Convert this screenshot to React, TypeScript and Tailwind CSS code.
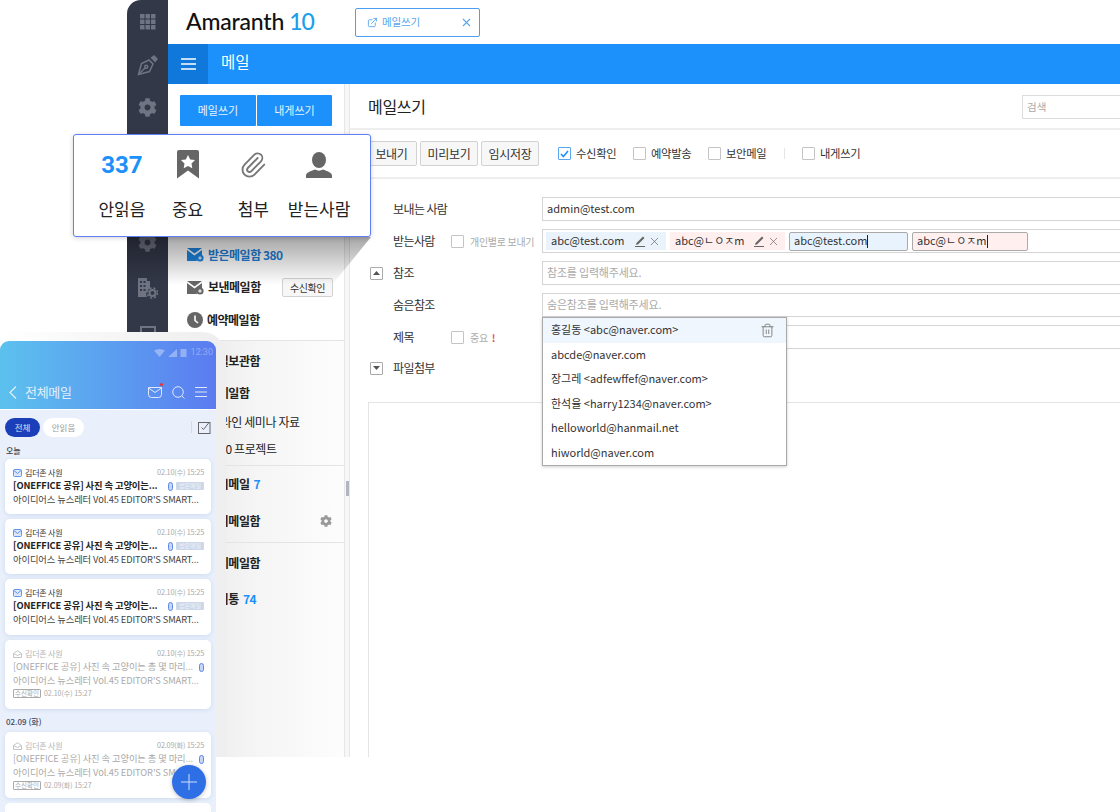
import React from "react";
import { ExternalLink, X, Paperclip, Trash2 } from "lucide-react";
import { FaCog } from "react-icons/fa";

const font = "font-['Noto_Sans_CJK_KR','Noto_Sans',sans-serif]";

const Grid = () => (
    <svg width="16" height="16" viewBox="0 0 16 16" fill="#6f7382">
        {[0, 5.5, 11].map((y) =>
            [0, 5.5, 11].map((x) => <rect key={`${x}-${y}`} x={x} y={y} width="4.5" height="4.5" rx="0.5" />)
        )}
    </svg>
);

const Nib = () => (
    <svg width="22" height="22" viewBox="0 0 22 22" fill="none" stroke="#6f7382" strokeWidth="1.5">
        <path d="M1.500 20.500L4.500 9.500L12 6L16 10L12.500 17.500z" />
        <path d="M1.500 20.500L8 14" />
        <circle cx="9.200" cy="12.800" r="1.500" />
        <path d="M13.500 3.800L18.200 8.500L21 5L17 1z" fill="#6f7382" stroke="none" />
    </svg>
);

const Building = () => (
    <svg width="20" height="22" viewBox="0 0 20 22">
        <path d="M0 1h9v3h3v7.5a6 6 0 0 0-3 8.5H0z" fill="#6f7382" />
        <g fill="#333849">
            <rect x="2" y="4" width="2" height="2" />
            <rect x="5.5" y="4" width="2" height="2" />
            <rect x="2" y="8" width="2" height="2" />
            <rect x="5.5" y="8" width="2" height="2" />
            <rect x="2" y="12" width="2" height="2" />
            <rect x="5.5" y="12" width="2" height="2" />
        </g>
        <circle cx="14.5" cy="16" r="3" fill="none" stroke="#6f7382" strokeWidth="2" />
        <circle cx="14.5" cy="16" r="5" fill="none" stroke="#6f7382" strokeWidth="1.5" strokeDasharray="2 2" />
    </svg>
);

const MailBadge = ({ color }: { color: string }) => (
    <svg width="17" height="15" viewBox="0 0 17 15">
        <path d="M0 1h15L7.5 6.5z" fill={color} />
        <path d="M0 3l7.5 5.5L15 3v5.2a4.5 4.5 0 0 0-5 5.8H0z" fill={color} />
        <circle cx="13" cy="11" r="3.6" fill={color} />
        <path d="M11.2 11h3.6M13 9.2v3.6" stroke="#fff" strokeWidth="1" />
    </svg>
);

const Clock = () => (
    <svg width="16" height="16" viewBox="0 0 16 16">
        <circle cx="8" cy="8" r="8" fill="#666" />
        <path d="M8 3.5V8.5L11 11" stroke="#fff" strokeWidth="1.6" fill="none" />
    </svg>
);

const PenLine = () => (
    <svg width="12" height="12" viewBox="0 0 12 12" fill="none" stroke="#666">
        <path d="M1 11.500h10" />
        <path d="M2 9.800L2.500 8L9 1.500L10.500 3L4 9.500z" fill="#666" stroke="none" />
    </svg>
);

const Check = ({ on }: { on?: boolean }) => (
    <span className={`flex h-[13px] w-[13px] shrink-0 items-center justify-center rounded-[1px] border bg-white ${on ? "border-[#5ba6ee]" : "border-[#c4c4c4]"}`}>
        {on && (
            <svg width="9" height="8" viewBox="0 0 9 8">
                <path d="M1 4l2.4 2.6L8 1" stroke="#1c90fb" strokeWidth="1.6" fill="none" />
            </svg>
        )}
    </span>
);

const Toggle = ({ up }: { up?: boolean }) => (
    <span className="flex h-[13px] w-[13px] items-center justify-center rounded-[1px] border border-[#aaa] bg-white">
        <svg width="7" height="4" viewBox="0 0 7 4">
            <path d={up ? "M3.5 0L7 4H0z" : "M0 0h7L3.5 4z"} fill="#555" />
        </svg>
    </span>
);

const ToolButton = ({ w, children }: { w: string; children: React.ReactNode }) => (
    <button className={`h-[25px] ${w} rounded-[2px] border border-[#d2d2d2] bg-[#f7f7f7] text-[12px] tracking-[-0.3px] text-[#333]`}>
        {children}
    </button>
);

const ToolCheck = ({ on, label, w }: { on?: boolean; label: string; w: string }) => (
    <label className={`flex items-center gap-[5px] ${w} text-[11.3px] tracking-[-0.3px] text-[#333]`}>
        <Check on={on} />
        <span>{label}</span>
    </label>
);

const FormRow = ({ toggle, label, option, mb, children }: { toggle?: React.ReactNode; label?: string; option?: React.ReactNode; mb?: string; children?: React.ReactNode }) => (
    <div className={`flex h-[24px] items-center ${mb ?? "mb-[8px]"}`}>
        <div className="flex w-[25px] items-center">{toggle}</div>
        <div className="w-[58px] text-[12px] tracking-[-0.6px] text-[#333]">{label}</div>
        <div className="flex w-[91px] items-center gap-[6px] text-[10px] tracking-[-0.3px] text-[#aaa]">{option}</div>
        {children}
    </div>
);

const Chip = ({ bg, w, children }: { bg: string; w: string; children: React.ReactNode }) => (
    <div className={`flex h-[18px] items-center justify-between pl-[5px] pr-[5px] ${bg} ${w} text-[11px] text-[#333]`}>
        <span className="pb-[1px]">{children}</span>
        <span className="flex items-center gap-[2px] text-[#666]">
            <PenLine />
            <X size={13} strokeWidth={1.3} />
        </span>
    </div>
);

const EditChip = ({ bg, w, children }: { bg: string; w: string; children: React.ReactNode }) => (
    <div className={`flex h-[19px] items-center rounded-[2px] border border-[#aaa] px-[4px] ${bg} ${w} text-[11px] text-[#333]`}>
        <span className="pb-[1px]">{children}</span>
        <span className="h-[13px] w-px bg-[#222]" />
    </div>
);

const SideRow = ({ h, className, children }: { h: string; className?: string; children: React.ReactNode }) => (
    <div className={`flex items-center ${h} ${className ?? ""}`}>{children}</div>
);

const Clip = () => (
    <span className="inline-block h-[9px] w-[5px] shrink-0 rounded-[3px] border border-[#5f86e8] bg-[#c6d6f7]" />
);

const Envelope = ({ open }: { open?: boolean }) =>
    open ? (
        <svg width="9" height="8" viewBox="0 0 9 8" fill="none" stroke="#c4c4c4">
            <path d="M.5 3.5L4.5.7l4 2.8v4h-8zM.5 3.5l4 2 4-2" />
        </svg>
    ) : (
        <svg width="9" height="8" viewBox="0 0 9 8">
            <rect x=".5" y=".5" width="8" height="7" rx="1" fill="#dbe6fb" stroke="#5f95ee" />
            <path d="M1 1.5l3.5 3 3.5-3" fill="none" stroke="#5f95ee" />
        </svg>
    );

const PhoneCard = ({ h, date, read, confirm }: { h: string; date: string; read?: boolean; confirm?: string }) => (
    <div className={`mb-[5px] ${h} rounded-[5px] bg-white pl-[8px] pr-[7px] pt-[7px] shadow-[0_1px_4px_rgba(90,120,190,0.18)]`}>
        <div className="flex h-[13px] items-center justify-between">
            <div className={`flex items-center gap-[3px] text-[8px] tracking-[-0.2px] ${read ? "text-[#b5b5b5]" : "text-[#333]"}`}>
                <Envelope open={read} />
                <span>김더존 사원</span>
            </div>
            <span className="text-[7.3px] tracking-[-0.2px] text-[#aaa]">{date}</span>
        </div>
        {read ? (
            <div className="flex h-[14px] items-center justify-between text-[9.3px] tracking-[-0.1px] text-[#aaa]">
                <span className="truncate">[ONEFFICE 공유] 사진 속 고양이는 총 몇 마리...</span>
                <Clip />
            </div>
        ) : (
            <div className="flex h-[14px] items-center text-[9.3px] tracking-[-0.1px] text-[#222]">
                <span className="w-[155px] truncate font-bold">[ONEFFICE 공유] 사진 속 고양이는...</span>
                <Clip />
                <span className="ml-[3px] h-[8px] w-[28px] rounded-[1px] bg-[#ccd7ea] text-center text-[6px] leading-[8px] text-[#eef2f9]">받은메일</span>
            </div>
        )}
        <div className={`h-[13px] truncate text-[9.3px] leading-[13px] tracking-[-0.1px] ${read ? "text-[#aaa]" : "text-[#444]"}`}>
            아이디어스 뉴스레터 Vol.45 EDITOR'S SMART...
        </div>
        {confirm && (
            <div className="mt-[1px] flex items-center gap-[3px] text-[7px] text-[#aaa]">
                <span className="rounded-[1px] border border-[#aaa] px-[1px] text-[6.5px] leading-[7px]">수신확인</span>
                <span>{confirm}</span>
            </div>
        )}
    </div>
);

const Phone = () => (
    <div className="absolute left-0 top-[341px] h-[471px] w-[216px] overflow-hidden rounded-t-[9px] bg-[#e9f0fb]">
        <div className="h-[69px] border-b border-white bg-gradient-to-r from-[#5cc1ee] to-[#5b7bf0] pt-[6px]">
            <div className="flex h-[12px] items-center justify-end gap-[3px] pr-[3px] text-[9px] text-white/35">
                <svg width="11" height="8" viewBox="0 0 11 8" fill="currentColor"><path d="M0 1.5Q5.5-1.5 11 1.5L5.5 8z" /></svg>
                <svg width="9" height="8" viewBox="0 0 9 8" fill="currentColor"><path d="M9 0v8H0z" /></svg>
                <svg width="7" height="8" viewBox="0 0 7 8" fill="currentColor"><rect x=".5" width="6" height="8" rx=".5" /></svg>
                <span className="ml-[1px] font-['Roboto',sans-serif]">12:30</span>
            </div>
            <div className="mt-[21px] flex h-[24px] items-center pl-[9px] pr-[9px] text-white/80">
                <svg width="8" height="13" viewBox="0 0 8 13" fill="none" stroke="currentColor" strokeWidth="1.2"><path d="M7 .5L1 6.5l6 6" /></svg>
                <span className="ml-[8px] flex-1 text-[13px] tracking-[-0.3px]">전체메일</span>
                <div className="relative mr-[10px]">
                    <svg width="14" height="12" viewBox="0 0 14 12" fill="none" stroke="currentColor"><path d="M.5 1.5h13v7a3 3 0 0 1-3 3h-7a3 3 0 0 1-3-3zM.5 2l6.5 4.5L13.5 2" /></svg>
                    <span className="absolute -right-[1px] -top-[3px] h-[3px] w-[3px] rounded-full bg-[#f03030]" />
                </div>
                <svg className="mr-[10px]" width="13" height="13" viewBox="0 0 13 13" fill="none" stroke="currentColor"><circle cx="6" cy="6" r="5.3" /><path d="M10 10l2.5 2.5" /></svg>
                <svg width="12" height="10" viewBox="0 0 12 10" fill="none" stroke="currentColor"><path d="M0 .5h12M0 5h12M0 9.5h12" /></svg>
            </div>
        </div>
        <div className="px-[5px]">
            <div className="flex h-[33px] items-center pt-[1px]">
                <span className="flex h-[19px] w-[35px] items-center justify-center rounded-full bg-[#1a3fb8] text-[8.5px] text-white/85">전체</span>
                <span className="ml-[3px] flex h-[19px] w-[41px] items-center justify-center rounded-full bg-white text-[8.5px] text-[#999]">안읽음</span>
                <span className="ml-auto h-[12px] w-px bg-[#d4dbe6]" />
                <svg className="ml-[6px]" width="13" height="13" viewBox="0 0 13 13" fill="none" stroke="#666"><rect x=".5" y="1.5" width="11.5" height="11" /><path d="M3.5 6.5l2 2L11 1.5" /></svg>
            </div>
            <div className="mb-[1px] h-[15px] pl-[1px] text-[8px] font-medium leading-[15px] text-[#444]">오늘</div>
            <PhoneCard h="h-[55px]" date="02.10(수) 15:25" />
            <PhoneCard h="h-[55px]" date="02.10(수) 15:25" />
            <PhoneCard h="h-[56px]" date="02.10(수) 15:25" />
            <PhoneCard h="h-[69px]" date="02.10(수) 15:25" read confirm="02.10(수) 15:27" />
            <div className="h-[18px] pl-[1px] pt-[2px] text-[8px] font-medium leading-[12px] text-[#3d4a68]">02.09 (화)</div>
            <PhoneCard h="h-[66px]" date="02.09(화) 15:25" read confirm="02.09(화) 15:27" />
            <div className="h-[20px] rounded-[5px] bg-white" />
        </div>
        <div className="absolute left-[172px] top-[424px] flex h-[34px] w-[34px] items-center justify-center rounded-full bg-[#2f6fe6] shadow-[0_1px_4px_rgba(0,0,0,0.25)]">
            <svg width="16" height="16" viewBox="0 0 16 16" stroke="#cfe0ff" strokeWidth="1"><path d="M8 0v16M0 8h16" /></svg>
        </div>
    </div>
);

const SummaryCard = () => (
    <div className="absolute left-[73px] top-[134px] h-[103px] w-[298px] rounded-[3px] border-[1.5px] border-[#5f80f5] bg-white pl-[15px] pt-[14px] text-[#222] shadow-[0_1px_5px_rgba(0,0,0,0.18)]">
        <div className="grid w-[263px] grid-cols-4">
            {[
                {
                    k: "안읽음",
                    icon: <span className="font-['Roboto',sans-serif] text-[24px] font-bold leading-[30px] text-[#1c90fb]">337</span>,
                },
                {
                    k: "중요",
                    icon: (
                        <svg width="22" height="29" viewBox="0 0 22 29">
                            <path d="M0 2Q0 0 2 0H20Q22 0 22 2V28.500L11 20.500L0 28.500Z" fill="#666" />
                            <path d="M11 5l2.200 4.400 4.800.7-3.500 3.400.8 4.800L11 16l-4.300 2.300.8-4.800-3.500-3.400 4.800-.7z" fill="#fff" />
                        </svg>
                    ),
                },
                { k: "첨부", icon: <Paperclip size={28} strokeWidth={1.6} color="#777" /> },
                {
                    k: "받는사람",
                    icon: (
                        <svg width="26" height="26" viewBox="0 0 26 26" fill="#666">
                            <ellipse cx="13" cy="8" rx="7" ry="8" />
                            <path d="M0 26v-2.500c0-3 5-4.500 9-6 2.500 1.500 5.500 1.500 8 0 4 1.500 9 3 9 6v2.500z" />
                        </svg>
                    ),
                },
            ].map((c) => (
                <div key={c.k} className="flex flex-col items-center">
                    <div className="flex h-[31px] items-center justify-center">{c.icon}</div>
                    <div className="mt-[17px] whitespace-nowrap text-[17px] leading-[24px]">{c.k}</div>
                </div>
            ))}
        </div>
    </div>
);

const recent = [
    "홍길동 <abc@naver.com>",
    "abcde@naver.com",
    "장그레 <adfewffef@naver.com>",
    "한석율 <harry1234@naver.com>",
    "helloworld@hanmail.net",
    "hiworld@naver.com",
];

export default function App() {
    return (
        <div className={`relative h-[812px] w-[1120px] overflow-hidden bg-white ${font}`}>
            <div className="ml-[127px] flex h-[757px] w-[993px]">
                {/* left rail */}
                <div className="flex w-[41px] shrink-0 flex-col items-center rounded-tl-[14px] bg-[#333849] text-[#6f7382]">
                    <div className="flex h-[43px] items-center"><Grid /></div>
                    <div className="flex h-[43px] items-center"><Nib /></div>
                    <div className="flex h-[43px] items-center"><FaCog size={19} /></div>
                    <div className="h-[91px]" />
                    <div className="flex h-[45px] items-center"><FaCog size={19} /></div>
                    <div className="flex h-[45px] items-center"><Building /></div>
                    <div className="flex h-[45px] items-center"><span className="h-[14px] w-[16px] border-[2px] border-[#6f7382]" /></div>
                </div>

                <div className="flex min-w-0 flex-1 flex-col">
                    {/* top bar */}
                    <div className="flex h-[44px] items-center bg-white pl-[18px]">
                        <div className="-mt-[2px] w-[169px] whitespace-nowrap font-['Lato',sans-serif] text-[23px] font-medium leading-none tracking-[-0.2px] text-[#111]">
                            Amaranth<span className="ml-[5px] tracking-[-1px] text-[#1c9fea]">10</span>
                        </div>
                        <div className="flex h-[29px] w-[125px] items-center rounded-[2px] border border-[#4b9ff0] pl-[11px] pr-[6px] text-[10.5px] tracking-[-0.2px] text-[#5aa6ee]">
                            <ExternalLink size={11} />
                            <span className="ml-[4px] flex-1">메일쓰기</span>
                            <X size={13} />
                        </div>
                    </div>
                    <div className="flex h-[40px] items-center bg-[#1c90fb] text-white">
                        <div className="flex h-full w-[40px] items-center justify-center bg-[#0f78da]">
                            <svg width="15" height="12" viewBox="0 0 15 12" stroke="#fff" strokeWidth="1.600"><path d="M0 1h15M0 6h15M0 11h15" /></svg>
                        </div>
                        <span className="-mt-[5px] ml-[13px] text-[15.500px] leading-none">메일</span>
                    </div>

                    <div className="flex min-h-0 flex-1">
                        {/* mail side panel */}
                        <div className="flex w-[176px] shrink-0 flex-col bg-white">
                            <div className="flex h-[154px] gap-px pl-[12px] pt-[11px]">
                                <button className="h-[31px] w-[76px] rounded-[1px] bg-[#1c90fb] text-[11px] text-white/90">메일쓰기</button>
                                <button className="h-[31px] w-[75px] rounded-[1px] bg-[#1c90fb] text-[11px] text-white/90">내게쓰기</button>
                            </div>
                            <div className="flex flex-col pl-[19px] pr-[11px] text-[12px] font-bold tracking-[-0.5px] text-[#222]">
                                <SideRow h="h-[33px]" className="text-[#1c7fd8]">
                                    <MailBadge color="#1c84e0" />
                                    <span className="ml-[4px]">받은메일함 380</span>
                                </SideRow>
                                <SideRow h="h-[32px]">
                                    <MailBadge color="#666" />
                                    <span className="ml-[4px]">보낸메일함</span>
                                    <span className="ml-auto flex h-[19px] w-[51px] items-center justify-center rounded-[2px] border border-[#d2d2d2] bg-[#f7f7f7] text-[10px] font-normal text-[#333]">수신확인</span>
                                </SideRow>
                                <SideRow h="h-[33px]">
                                    <Clock />
                                    <span className="ml-[4px]">예약메일함</span>
                                </SideRow>
                            </div>
                            <div className="mt-[4px] flex flex-1 flex-col border-t border-[#e4e4e4] bg-gradient-to-r from-[#e6e6e6] via-[#f5f5f5] to-[#fdfdfd] pl-[39px] text-[12px] tracking-[-0.4px] text-[#222]">
                                <SideRow h="h-[40px]" className="font-bold">메일보관함</SideRow>
                                <SideRow h="h-[24px]" className="font-bold">내메일함</SideRow>
                                <SideRow h="h-[33px]" className="pl-[3px]">온라인 세미나 자료</SideRow>
                                <SideRow h="h-[22px]" className="pl-[3px]">10.0 프로젝트</SideRow>
                                <SideRow h="h-[37px]" className="mt-[5px] border-t border-[#e4e4e4] font-bold">임시메일<span className="ml-[4px] text-[#1c90fb]">7</span></SideRow>
                                <SideRow h="h-[37px]" className="justify-between pr-[12px] font-bold">공지메일함<FaCog size={12} color="#999" /></SideRow>
                                <SideRow h="h-[41px]" className="mt-[3px] border-t border-[#e4e4e4] font-bold">전체메일함</SideRow>
                                <SideRow h="h-[31px]" className="font-bold">휴지통<span className="ml-[4px] text-[#1c90fb]">74</span></SideRow>
                            </div>
                        </div>

                        <div className="relative w-[6px] shrink-0 border-x border-[#e6e6e6] bg-[#f7f7f7]">
                            <span className="absolute left-[1px] top-[397px] h-[15px] w-[3px] bg-[#b0b5c0]" />
                        </div>

                        {/* compose */}
                        <div className="flex min-w-0 flex-1 flex-col overflow-hidden bg-white">
                            <div className="flex h-[46px] shrink-0 items-center justify-between border-b-2 border-[#eee] pl-[18px]">
                                <span className="text-[16px] tracking-[-0.3px] text-[#222]">메일쓰기</span>
                                <div className="mt-[1px] flex h-[24px] w-[98px] items-center border border-r-0 border-[#ddd] pl-[4px] text-[10.5px] text-[#aaa]">검색</div>
                            </div>
                            <div className="flex h-[49px] shrink-0 items-center border-b-2 border-[#eee] pl-[16px]">
                                <div className="flex gap-[3px]">
                                    <ToolButton w="w-[51px]">보내기</ToolButton>
                                    <ToolButton w="w-[58px]">미리보기</ToolButton>
                                    <ToolButton w="w-[58px]">임시저장</ToolButton>
                                </div>
                                <div className="ml-[19px] flex items-center">
                                    <ToolCheck on label="수신확인" w="w-[75px]" />
                                    <ToolCheck label="예약발송" w="w-[75px]" />
                                    <ToolCheck label="보안메일" w="w-[76px]" />
                                    <span className="h-[11px] w-px bg-[#e5e5e5]" />
                                    <ToolCheck label="내게쓰기" w="ml-[17px]" />
                                </div>
                            </div>

                            <div className="shrink-0 pl-[18px] pt-[18px]">
                                <FormRow label="보내는 사람">
                                    <div className="flex h-[24px] flex-1 items-center border border-r-0 border-[#d4d4d4] pb-[2px] pl-[4px] text-[11px] text-[#333]">admin@test.com</div>
                                </FormRow>
                                <FormRow label="받는사람" option={<><Check /><span className="whitespace-nowrap">개인별로 보내기</span></>}>
                                    <div className="flex h-[24px] flex-1 items-center gap-[4px] border border-r-0 border-[#d4d4d4] pl-[3px]">
                                        <Chip bg="bg-[#eaf3fc]" w="w-[120px]">abc@test.com</Chip>
                                        <Chip bg="bg-[#ffefef]" w="w-[115px]">abc@ㄴㅇㅈm</Chip>
                                        <EditChip bg="bg-[#e9f3fd]" w="w-[119px]">abc@test.com</EditChip>
                                        <EditChip bg="bg-[#fff0ef]" w="w-[116px]">abc@ㄴㅇㅈm</EditChip>
                                    </div>
                                </FormRow>
                                <FormRow toggle={<div className="ml-[2px]"><Toggle up /></div>} label="참조">
                                    <div className="flex h-[24px] flex-1 items-center border border-r-0 border-[#d4d4d4] pb-[2px] pl-[4px] text-[11px] tracking-[-0.2px] text-[#aaa]">참조를 입력해주세요.</div>
                                </FormRow>
                                <FormRow label="숨은참조">
                                    <div className="relative flex h-[24px] flex-1 items-center border border-r-0 border-[#d4d4d4] pb-[2px] pl-[4px] text-[11px] tracking-[-0.2px] text-[#aaa]">
                                        숨은참조를 입력해주세요.
                                        <div className="absolute -left-px top-[23px] z-10 h-[149px] w-[245px] border border-[#aaa] bg-white text-[11px] tracking-normal text-[#333] shadow-[0_1px_3px_rgba(0,0,0,0.2)]">
                                            {recent.map((r, i) => (
                                                <div key={r} className={`flex h-[24.500px] items-center justify-between pl-[8px] pr-[11px] ${i === 0 ? "bg-[#eff6fd]" : ""}`}>
                                                    <span className="pb-[2px]">{r}</span>
                                                    {i === 0 && <Trash2 size={15} strokeWidth={1.4} color="#777" />}
                                                </div>
                                            ))}
                                        </div>
                                    </div>
                                </FormRow>
                                <FormRow mb="mb-[7px]" label="제목" option={<><Check /><span>중요</span><span className="-ml-[2px] font-bold text-[#f05050]">!</span></>}>
                                    <div className="h-[24px] flex-1 border border-r-0 border-[#d4d4d4]" />
                                </FormRow>
                                <FormRow toggle={<div className="ml-[2px]"><Toggle /></div>} label="파일첨부" />
                            </div>
                            <div className="ml-[18px] mt-[14px] flex-1 border-l border-t border-[#e4e4e4]" />
                        </div>
                    </div>
                </div>
            </div>

            {/* card drop shadow falling on the panel */}
            <div className="absolute left-[127px] top-[237px] h-[48px] w-[244px] bg-gradient-to-b from-black/35 to-transparent [clip-path:polygon(0_0,100%_0,84%_100%,0_100%)]" />
            <SummaryCard />

            {/* phone overlay */}
            <div className="absolute left-0 top-[332px] h-[425px] w-[226px] rounded-tr-[24px] bg-gradient-to-r from-white via-[#f6f6f6] to-[#eeeeee]" />
            <Phone />
        </div>
    );
}
